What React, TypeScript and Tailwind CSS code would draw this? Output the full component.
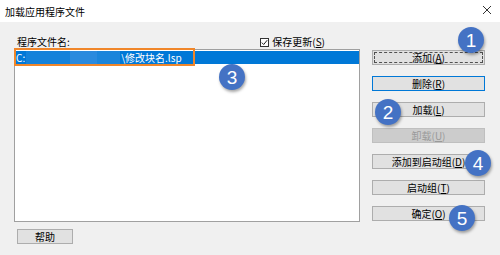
import React from "react";

const font = { fontFamily: '"Noto Sans CJK SC", "Noto Sans", sans-serif' };

function Btn({
  label,
  hot,
  variant = "normal",
}: {
  label: string;
  hot: string;
  variant?: "normal" | "focus" | "default" | "disabled";
}) {
  const base =
    "h-[15px] w-[113px] flex items-center justify-center text-[10px] leading-none border";
  const cls =
    variant === "disabled"
      ? "bg-[#cccccc] border-[#bfbfbf] text-[#9a9a9a]"
      : variant === "default"
        ? "bg-[#e1e1e1] border-[#0078d7] text-black"
        : "bg-[#e1e1e1] border-[#adadad] text-black";
  return (
    <div className={`${base} ${cls} relative`}>
      {variant === "focus" && (
        <div className="absolute inset-[1px] border border-dashed border-[#505050]" />
      )}
      <span>
        {label}(<u>{hot}</u>)
      </span>
    </div>
  );
}

function Badge({ n, className }: { n: string; className: string }) {
  return (
    <div
      className={`absolute w-[26px] h-[26px] rounded-full bg-[#4472c4] text-white text-[19px] leading-none flex items-center justify-center shadow-[1px_2px_3px_rgba(0,0,0,0.35)] ${className}`}
      style={{ fontFamily: '"Liberation Sans", Arial, sans-serif' }}
    >
      {n}
    </div>
  );
}

export default function App() {
  return (
    <div className="relative w-[500px] h-[255px] bg-[#f0f0f0] overflow-hidden" style={font}>
      <div className="h-[22px] bg-white flex items-center justify-between pl-[5px] pr-[8px]">
        <span className="text-[10px] text-black">加载应用程序文件</span>
        <svg width="10" height="10" viewBox="0 0 10 10" className="mt-[-2px]">
          <path d="M1 1 L9 9 M9 1 L1 9" stroke="#333" strokeWidth="1" />
        </svg>
      </div>

      <div className="flex pl-[14px] pt-[13px]">
        <div className="flex flex-col w-[346px]">
          <div className="h-[14px] flex items-start justify-between">
            <span className="ml-[3px] text-[10px] leading-[14px] text-black">程序文件名:</span>
            <div className="flex items-center gap-[3px] mr-[35px]">
              <div className="w-[9px] h-[9px] border border-[#333] bg-white flex items-center justify-center">
                <svg width="7" height="7" viewBox="0 0 7 7">
                  <path d="M0.8 3.6 L2.7 5.5 L6.2 1.2" stroke="#222" strokeWidth="1" fill="none" />
                </svg>
              </div>
              <span className="text-[10px] leading-[14px] text-black">
                保存更新(<u>S</u>)
              </span>
            </div>
          </div>
          <div className="h-[173px] bg-white border border-[#a0a0a0] pt-[1px]">
            <div className="h-[13px] bg-[#0078d7] flex items-center text-white text-[10px] leading-none pl-[1px]">
              <span>C:</span>
              <div className="flex h-full ml-[1px]">
                <div className="w-[44px] bg-[#1482da]" />
                <div className="w-[27px] bg-[#2a8ade]" />
                <div className="w-[23px] bg-[#1b85db]" />
              </div>
              <span className="ml-[1px]">\修改块名.lsp</span>
            </div>
          </div>
          <div className="ml-[3px] mt-[7px] w-[56px] h-[15px] bg-[#e1e1e1] border border-[#adadad] flex items-center justify-center text-[10px] leading-none text-black">
            帮助
          </div>
        </div>

        <div className="ml-[12px] mt-[15px] flex flex-col gap-[11px]">
          <Btn label="添加" hot="A" variant="focus" />
          <Btn label="删除" hot="R" variant="default" />
          <Btn label="加载" hot="L" />
          <Btn label="卸载" hot="U" variant="disabled" />
          <Btn label="添加到启动组" hot="D" />
          <Btn label="启动组" hot="T" />
          <Btn label="确定" hot="O" />
        </div>
      </div>

      <div className="absolute left-[14px] top-[48px] w-[181px] h-[18px] border-2 border-[#f0862a]" />

      <Badge n="1" className="left-[458px] top-[27px]" />
      <Badge n="2" className="left-[375px] top-[99px]" />
      <Badge n="3" className="left-[219px] top-[64px]" />
      <Badge n="4" className="left-[465px] top-[150px]" />
      <Badge n="5" className="left-[449px] top-[205px]" />
    </div>
  );
}
